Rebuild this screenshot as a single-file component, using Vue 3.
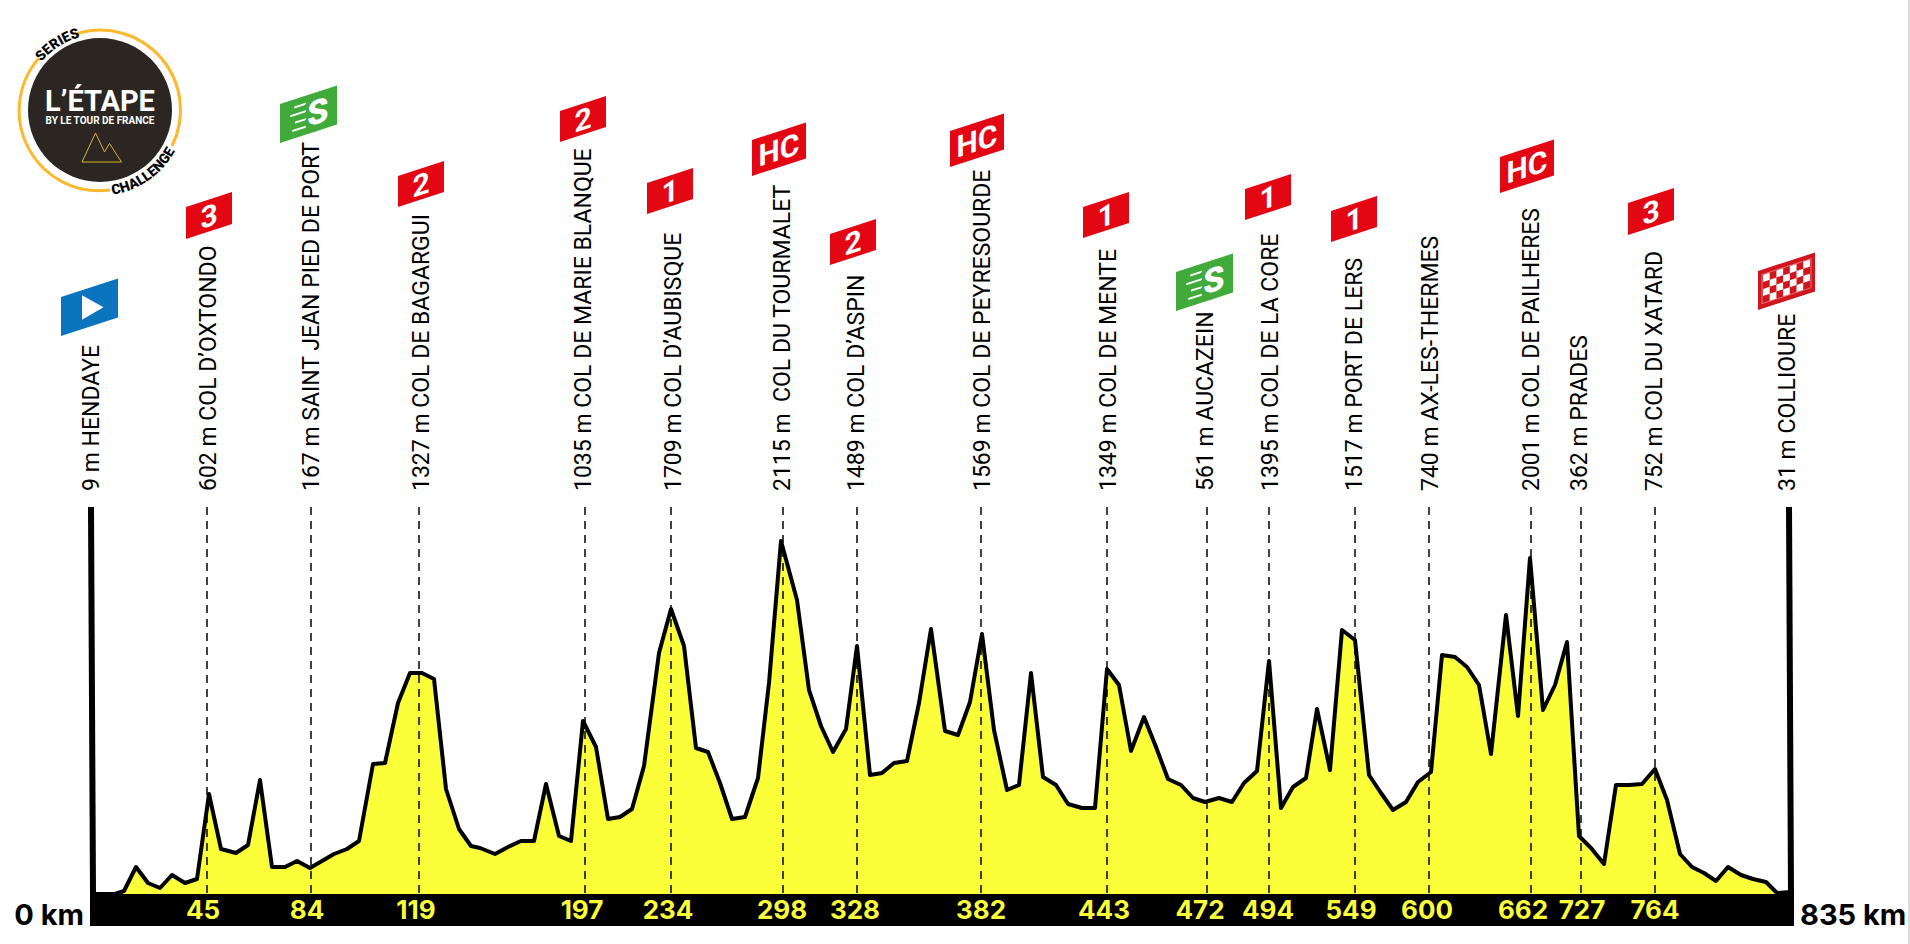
<script setup>
const FLAGS = {
  start: { width: 57, height: 39, kind: 'start' },
  finish: { width: 57, height: 39, kind: 'finish' },
  sprint: { width: 57, height: 39, kind: 'sprint' },
  hc: { width: 54, height: 36, kind: 'climb', text: 'HC' },
  cat1: { width: 46, height: 31, kind: 'climb', text: '1' },
  cat2: { width: 46, height: 31, kind: 'climb', text: '2' },
  cat3: { width: 46, height: 32, kind: 'climb', text: '3' },
}

// x: guide line, labelX: baseline of the upright label, kmX: centre of the distance
const stops = [
  { name: '9 m HENDAYE', labelX: 99, flag: 'start', fx: 61, fy: 297 },
  { name: '602 m COL D’OXTONDO', labelX: 216, x: 207, km: 45, kmX: 203, flag: 'cat3', fx: 186, fy: 207 },
  { name: '167 m SAINT JEAN PIED DE PORT', labelX: 319, x: 311, km: 84, kmX: 307, flag: 'sprint', fx: 280, fy: 104 },
  { name: '1327 m COL DE BAGARGUI', labelX: 429, x: 419, km: 119, kmX: 416, flag: 'cat2', fx: 398, fy: 176 },
  { name: '1035 m COL DE MARIE BLANQUE', labelX: 591, x: 585, km: 197, kmX: 582, flag: 'cat2', fx: 560, fy: 111 },
  { name: '1709 m COL D’AUBISQUE', labelX: 681, x: 671, km: 234, kmX: 668, flag: 'cat1', fx: 647, fy: 183 },
  { name: '2115 m \u00a0COL DU TOURMALET', labelX: 790, x: 783, km: 298, kmX: 782, flag: 'hc', fx: 752, fy: 140 },
  { name: '1489 m COL D’ASPIN', labelX: 864, x: 857, km: 328, kmX: 855, flag: 'cat2', fx: 830, fy: 234 },
  { name: '1569 m COL DE PEYRESOURDE', labelX: 990, x: 981, km: 382, kmX: 981, flag: 'hc', fx: 950, fy: 131 },
  { name: '1349 m COL DE MENTE', labelX: 1116, x: 1107, km: 443, kmX: 1104, flag: 'cat1', fx: 1083, fy: 207 },
  { name: '561 m AUCAZEIN', labelX: 1213, x: 1207, km: 472, kmX: 1200, flag: 'sprint', fx: 1176, fy: 272 },
  { name: '1395 m COL DE LA CORE', labelX: 1278, x: 1269, km: 494, kmX: 1268, flag: 'cat1', fx: 1245, fy: 189 },
  { name: '1517 m PORT DE LERS', labelX: 1362, x: 1355, km: 549, kmX: 1351, flag: 'cat1', fx: 1331, fy: 211 },
  { name: '740 m AX-LES-THERMES', labelX: 1438, x: 1429, km: 600, kmX: 1427 },
  { name: '2001 m COL DE PAILHERES', labelX: 1539, x: 1531, km: 662, kmX: 1523, flag: 'hc', fx: 1500, fy: 157 },
  { name: '362 m PRADES', labelX: 1587, x: 1581, km: 727, kmX: 1582 },
  { name: '752 m COL DU XATARD', labelX: 1662, x: 1655, km: 764, kmX: 1655, flag: 'cat3', fx: 1628, fy: 203 },
  { name: '31 m COLLIOURE', labelX: 1795, flag: 'finish', fx: 1758, fy: 271 },
].map((stop) => ({ ...stop, badge: FLAGS[stop.flag] }))

const guides = stops.filter((stop) => stop.km)
const flagged = stops.filter((stop) => stop.badge)

const profile = `96,894 115,894 124,891 136,867 148,883 160,888 172,875 185,883 197,879 209,794
221,849 236,853 248,845 260,780 272,867 285,867 297,861 310,868 322,861 334,854 347,849 359,841
373,764 385,763 398,703 410,673 422,673 434,679 446,789 459,829 471,846 480,848 495,854 508,847
521,841 534,841 546,784 559,836 571,841 583,721 596,747 608,819 620,817 632,809 644,766 659,653
671,609 684,646 696,748 708,752 720,783 732,819 745,817 758,778 769,683 781,541 797,600 809,690
821,726 833,752 846,729 857,646 870,775 882,773 894,763 907,761 919,703 931,629 945,731 958,735
970,702 982,634 994,730 1007,790 1019,785 1031,673 1043,777 1056,785 1068,804 1082,808 1095,808
1107,669 1119,685 1131,751 1144,717 1156,747 1168,779 1181,785 1193,798 1205,802 1219,798 1232,802
1244,783 1257,771 1269,661 1281,808 1293,787 1306,778 1317,709 1330,770 1342,630 1355,640 1369,775
1381,793 1393,810 1406,802 1418,782 1431,772 1442,655 1455,657 1467,667 1479,685 1491,754 1506,615
1518,716 1530,558 1543,710 1555,685 1567,642 1579,836 1591,848 1604,864 1616,785 1629,785 1642,784
1655,769 1667,800 1680,854 1692,867 1704,873 1716,881 1728,867 1741,875 1753,879 1766,882 1777,893
1790,892`

const checks = Array.from({ length: 28 }, (_, i) => ({ col: i % 7, row: Math.floor(i / 7) })).filter(
  ({ col, row }) => (col + row) % 2 === 0,
)
</script>

<template>
  <main class="page">
    <svg class="chart" viewBox="0 0 1908 944" role="img" aria-label="L’Étape Series Challenge, Hendaye – Collioure">
      <defs>
        <path id="arc-series" d="M24 110 A76 76 0 0 1 131 41" />
        <path id="arc-challenge" d="M51 180 A85 85 0 0 0 182 88" />
      </defs>

      <g class="logo">
        <path class="ring" d="M76 34 A80 80 0 0 1 172 146" />
        <path class="ring" d="M110 190 A80 80 0 0 1 39 58" />
        <circle class="disc" cx="100" cy="110" r="72" />
        <text class="logo-title" x="100" y="111">L’ÉTAPE</text>
        <text class="logo-sub" x="100" y="124">BY LE TOUR DE FRANCE</text>
        <path class="peaks" d="M82 162 L95.500 133 L104.500 152 L109.500 143.500 L121.500 162 Z" />
        <text class="logo-arc"><textPath href="#arc-series" startOffset="50%">SERIES</textPath></text>
        <text class="logo-arc"><textPath href="#arc-challenge" startOffset="50%">CHALLENGE</textPath></text>
      </g>

      <polygon class="area" :points="`90,895 ${profile} 1790,895`" />
      <polyline class="ridge" :points="profile" />
      <line v-for="stop in guides" :key="stop.km" class="guide" :x1="stop.x" :x2="stop.x" y1="507" y2="894" />

      <polygon points="88,507 94,507 96,895 90,895" />
      <polygon points="1786,507 1792,507 1794,895 1788,895" />
      <rect x="90" y="894" width="1704" height="32" />

      <text v-for="stop in guides" :key="stop.km" class="km" :x="stop.kmX" y="919">{{ stop.km }}</text>
      <text class="end from" x="84" y="925">0 km</text>
      <text class="end" x="1800" y="925">835 km</text>

      <text
        v-for="stop in stops"
        :key="stop.name"
        class="label"
        :transform="`translate(${stop.labelX} 491) rotate(-90)`"
      >{{ stop.name }}</text>

      <g
        v-for="stop in flagged"
        :key="stop.name"
        :class="['flag', stop.badge.kind]"
        :transform="`translate(${stop.fx} ${stop.fy}) skewY(-18)`"
      >
        <rect class="board" :width="stop.badge.width" :height="stop.badge.height" />
        <path v-if="stop.badge.kind === 'start'" class="mark" d="M21 5 V29.500 L42.500 24 Z" />
        <template v-else-if="stop.badge.kind === 'sprint'">
          <path class="speed" d="M15 8 H25 M11 15.500 H25 M16 23.500 H25 M13 31 H25" />
          <text class="flag-text sprint-text" x="38" y="32">S</text>
        </template>
        <template v-else-if="stop.badge.kind === 'finish'">
          <rect class="rim" x="4" y="5" width="49" height="29" />
          <rect
            v-for="c in checks"
            :key="`${c.col}-${c.row}`"
            class="mark"
            :x="5 + c.col * 6.7"
            :y="5.500 + c.row * 7"
            width="6.700"
            height="7"
          />
        </template>
        <text
          v-else
          class="flag-text"
          :x="stop.badge.width / 2"
          :y="stop.badge.height / 2 + 11"
        >{{ stop.badge.text }}</text>
      </g>
    </svg>
  </main>
</template>

<style>
body {
  background: #fff;
}
</style>

<style scoped>
.page {
  border-right: 2px solid #dcdcdc;
}
.chart {
  display: block;
  width: 100%;
  height: auto;
  font-family: Roboto, "Liberation Sans", sans-serif;
}
.area {
  fill: #fbff3a;
}
.ridge {
  fill: none;
  stroke: #000;
  stroke-width: 4px;
  stroke-linejoin: round;
}
.guide {
  stroke: #000;
  stroke-opacity: 0.75;
  stroke-width: 2px;
  stroke-dasharray: 8 6;
}
.km,
.end {
  font-family: Inter, Roboto, sans-serif;
  font-weight: 700;
}
.km {
  fill: #fbff3a;
  font-size: 26px;
  text-anchor: middle;
}
.end {
  font-size: 29px;
}
.from {
  text-anchor: end;
}
.label {
  font-size: 23px;
}
.board {
  fill: #e30613;
}
.start .board {
  fill: #0a74bf;
}
.sprint .board {
  fill: #40aa3a;
}
.finish .board {
  fill: #d0151f;
}
.mark {
  fill: #fff;
}
.rim {
  fill: none;
  stroke: #e8747a;
  stroke-width: 1px;
}
.speed {
  fill: none;
  stroke: #fff;
  stroke-width: 2px;
  stroke-linecap: round;
}
.flag-text {
  fill: #fff;
  font-size: 30px;
  font-weight: 700;
  text-anchor: middle;
}
.sprint-text {
  font-size: 34px;
  font-weight: 900;
}
.ring {
  fill: none;
  stroke: #fdb92e;
  stroke-width: 3px;
}
.disc {
  fill: #2b2622;
}
.peaks {
  fill: none;
  stroke: #d6b52c;
  stroke-width: 1px;
}
.logo-title,
.logo-sub {
  fill: #fff;
  font-weight: 700;
  text-anchor: middle;
}
.logo-title {
  font-size: 29px;
}
.logo-sub {
  font-size: 10px;
}
.logo-arc {
  font-size: 14px;
  font-weight: 900;
  text-anchor: middle;
}
</style>
